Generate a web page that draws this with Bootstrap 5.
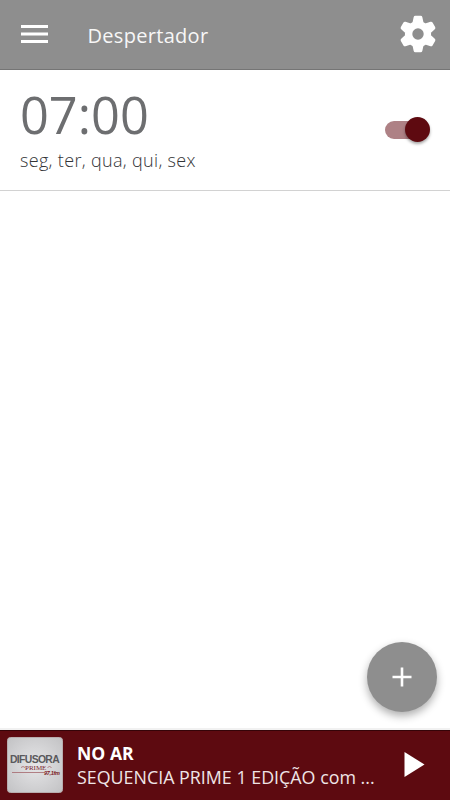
<!DOCTYPE html>
<html lang="pt-BR">

<head>
    <meta charset="UTF-8">
    <meta name="viewport" content="width=device-width, initial-scale=1.0">
    <title>Despertador</title>
    <link href="https://cdn.jsdelivr.net/npm/bootstrap@5.3.0/dist/css/bootstrap.min.css" rel="stylesheet">
    <style>
        body {
            font-family: "Open Sans", "Noto Sans", sans-serif;
            background-color: #fff;
            overflow: hidden;
        }

        svg {
            display: block;
        }

        .topbar {
            height: 70px;
            background-color: #8e8e8e;
            border-bottom: 1px solid #757575;
            padding: 0 14px 1px 21px;
        }

        .topbar-title {
            margin-left: 39.5px;
            padding-top: 3px;
            font-size: 20px;
            line-height: 28px;
            letter-spacing: 0.3px;
            color: #f7f7f7;
        }

        .alarm-item {
            height: 121px;
            padding: 0 20px;
            border-bottom: 1px solid #d2d2d2;
        }

        .alarm-time {
            font-size: 50.5px;
            line-height: 56px;
            color: #6d6e70;
            margin-top: 17px;
        }

        .alarm-days {
            font-size: 18px;
            font-weight: 300;
            line-height: 24px;
            letter-spacing: 0.33px;
            color: #333437;
            margin-top: 5px;
        }

        .toggle {
            width: 45px;
            height: 25px;
            margin-bottom: 1px;
        }

        .toggle-track {
            width: 36px;
            height: 18px;
            border-radius: 9px;
            background-color: #ae8185;
        }

        .toggle-knob {
            width: 25px;
            height: 25px;
            background-color: #5e0a10;
            box-shadow: 0 2px 3px rgba(0, 0, 0, 0.35);
        }

        .fab {
            right: 13px;
            bottom: 16px;
            width: 70px;
            height: 70px;
            background-color: #8e8e8e;
            box-shadow: 0 4px 8px rgba(0, 0, 0, 0.32);
        }

        .player {
            height: 72px;
            background-color: #5d0a10;
            border-top: 2px solid #f1f1f1;
            box-shadow: inset 0 1px 0 #350408;
            padding: 0 25px 0 7px;
            color: #fff;
        }

        .player-inner {
            margin-left: 14px;
            padding-bottom: 1px;
        }

        .player-label {
            font-size: 17.6px;
            line-height: 24px;
        }

        .player-show {
            font-size: 17.85px;
            line-height: 24px;
            color: #efe5e6;
        }
    </style>
</head>

<body>

    <div class="vh-100 d-flex flex-column">

        <!-- Top bar -->
        <header class="topbar d-flex align-items-center">
            <svg width="27" height="18" viewBox="0 0 27 18" fill="#fff">
                <rect width="27" height="3" />
                <rect y="7.5" width="27" height="3" />
                <rect y="15" width="27" height="3" />
            </svg>
            <div class="topbar-title">Despertador</div>
            <svg class="ms-auto" width="36" height="38" viewBox="-18 -19 36 38" fill="#fff">
                <defs>
                    <path id="tooth" d="M-5.500-11.500L-4.300-16.900Q-4-18.300-2.600-18.300H2.600Q4-18.300 4.300-16.900L5.500-11.500z" />
                </defs>
                <circle r="9.400" fill="none" stroke="#fff" stroke-width="7.400" />
                <use href="#tooth" />
                <use href="#tooth" transform="rotate(60)" />
                <use href="#tooth" transform="rotate(120)" />
                <use href="#tooth" transform="rotate(180)" />
                <use href="#tooth" transform="rotate(240)" />
                <use href="#tooth" transform="rotate(300)" />
            </svg>
        </header>

        <!-- Alarm list -->
        <main class="flex-grow-1 position-relative">
            <div class="alarm-item d-flex justify-content-between align-items-center">
                <div class="align-self-start">
                    <div class="alarm-time">07:00</div>
                    <div class="alarm-days">seg, ter, qua, qui, sex</div>
                </div>
                <div class="toggle position-relative d-flex align-items-center">
                    <div class="toggle-track"></div>
                    <div class="toggle-knob rounded-circle position-absolute top-0 end-0"></div>
                </div>
            </div>

            <button class="fab btn border-0 rounded-circle p-0 position-absolute d-flex align-items-center justify-content-center" type="button" aria-label="Adicionar">
                <svg width="20" height="20" viewBox="0 0 20 20" stroke="#fff" stroke-width="2.6">
                    <path d="M10 .5v19M.5 10h19" />
                </svg>
            </button>
        </main>

        <!-- Player -->
        <footer class="player d-flex align-items-center">
            <svg class="flex-shrink-0" width="56" height="56" viewBox="0 0 56 56">
                <defs>
                    <radialGradient id="cover" r=".7">
                        <stop offset="0" stop-color="#e6e6e8" />
                        <stop offset="1" stop-color="#c2c2c4" />
                    </radialGradient>
                </defs>
                <rect x=".5" y=".5" width="55" height="55" rx="3" fill="url(#cover)" stroke="#b9adae" />
                <text x="3" y="26" letter-spacing="-.65" font-family="Liberation Sans, sans-serif" font-size="10.400" font-weight="700" fill="#5a595c">DIFUSORA</text>
                <text x="18" y="33" font-family="Liberation Serif, serif" font-size="7" fill="#7d2831">PRIME</text>
                <path d="M14 30.500q2-2 4 0M40.500 30.500q2-2 4 0" fill="none" stroke="#a5666c" stroke-width=".8" />
                <path d="M5 35.500h32" stroke="#a5666c" stroke-width=".8" />
                <text x="37" y="37.800" letter-spacing="-.3" font-family="Liberation Sans, sans-serif" font-size="5.500" font-weight="700" font-style="italic" fill="#7a1720">97,1fm</text>
            </svg>
            <div class="player-inner flex-grow-1">
                <div class="player-label fw-bold">NO AR</div>
                <div class="player-show text-nowrap">SEQUENCIA PRIME 1 EDIÇÃO com ...</div>
            </div>
            <svg class="flex-shrink-0" width="21" height="27" viewBox="0 0 21 27" fill="#fff">
                <path d="M.5 0v25L20.500 12.500z" />
            </svg>
        </footer>

    </div>

    <script src="https://cdn.jsdelivr.net/npm/bootstrap@5.3.0/dist/js/bootstrap.bundle.min.js"></script>
</body>

</html>
